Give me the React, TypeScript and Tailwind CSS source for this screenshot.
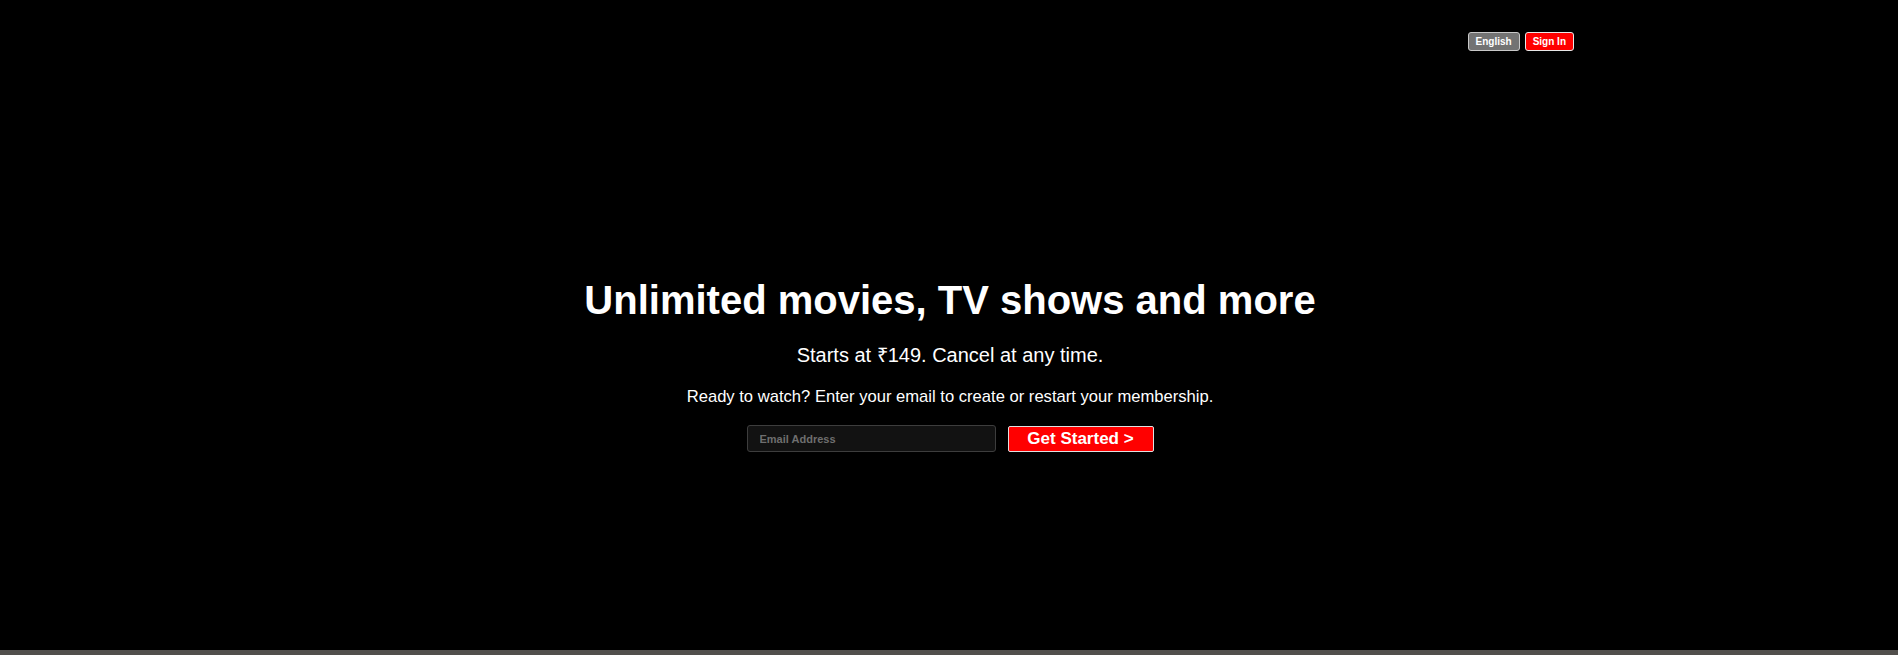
import React from "react";

export default function App() {
  return (
    <div
      className="w-full bg-black text-white"
      style={{ fontFamily: '"Liberation Sans", Arial, sans-serif' }}
    >
      <div className="flex h-[650px] flex-col">
        <nav className="flex justify-end gap-[5px] pr-[324px] pt-[32px]">
          <button className="flex h-[19px] items-center rounded-[3px] border border-[#c8c8c8] bg-[#737373] px-[7px] text-[10px] font-bold text-white">
            English
          </button>
          <button className="flex h-[19px] items-center rounded-[3px] border border-[#e8e8e8] bg-[#ff0000] px-[7px] text-[10px] font-bold text-white">
            Sign In
          </button>
        </nav>
        <section className="mt-[226px] flex flex-col items-center pl-[2px]">
          <h1 className="text-[40px] font-bold leading-[46px]">
            Unlimited movies, TV shows and more
          </h1>
          <p className="mt-[21px] text-[20px] leading-[23px]">
            Starts at ₹149. Cancel at any time.
          </p>
          <p className="mt-[20px] text-[16.6px] leading-[19px]">
            Ready to watch? Enter your email to create or restart your membership.
          </p>
          <form
            className="mt-[19px] flex items-center gap-[12px]"
            onSubmit={(e) => e.preventDefault()}
          >
            <input
              type="email"
              placeholder="Email Address"
              className="h-[27px] w-[249px] rounded-[3px] border border-[#3d3d3d] bg-[#121212] px-[12px] text-[11px] font-bold text-white outline-none placeholder:text-[#6e6e6e]"
              style={{ fontFamily: '"Liberation Sans", Arial, sans-serif' }}
            />
            <button
              type="submit"
              className="flex h-[26px] w-[146px] items-center justify-center rounded-[2px] border border-[#e0e0e0] bg-[#ff0000] text-[17px] font-bold text-white"
            >
              Get Started &gt;
            </button>
          </form>
        </section>
      </div>
      <div className="h-[5px] bg-[#514f4c]" />
    </div>
  );
}
